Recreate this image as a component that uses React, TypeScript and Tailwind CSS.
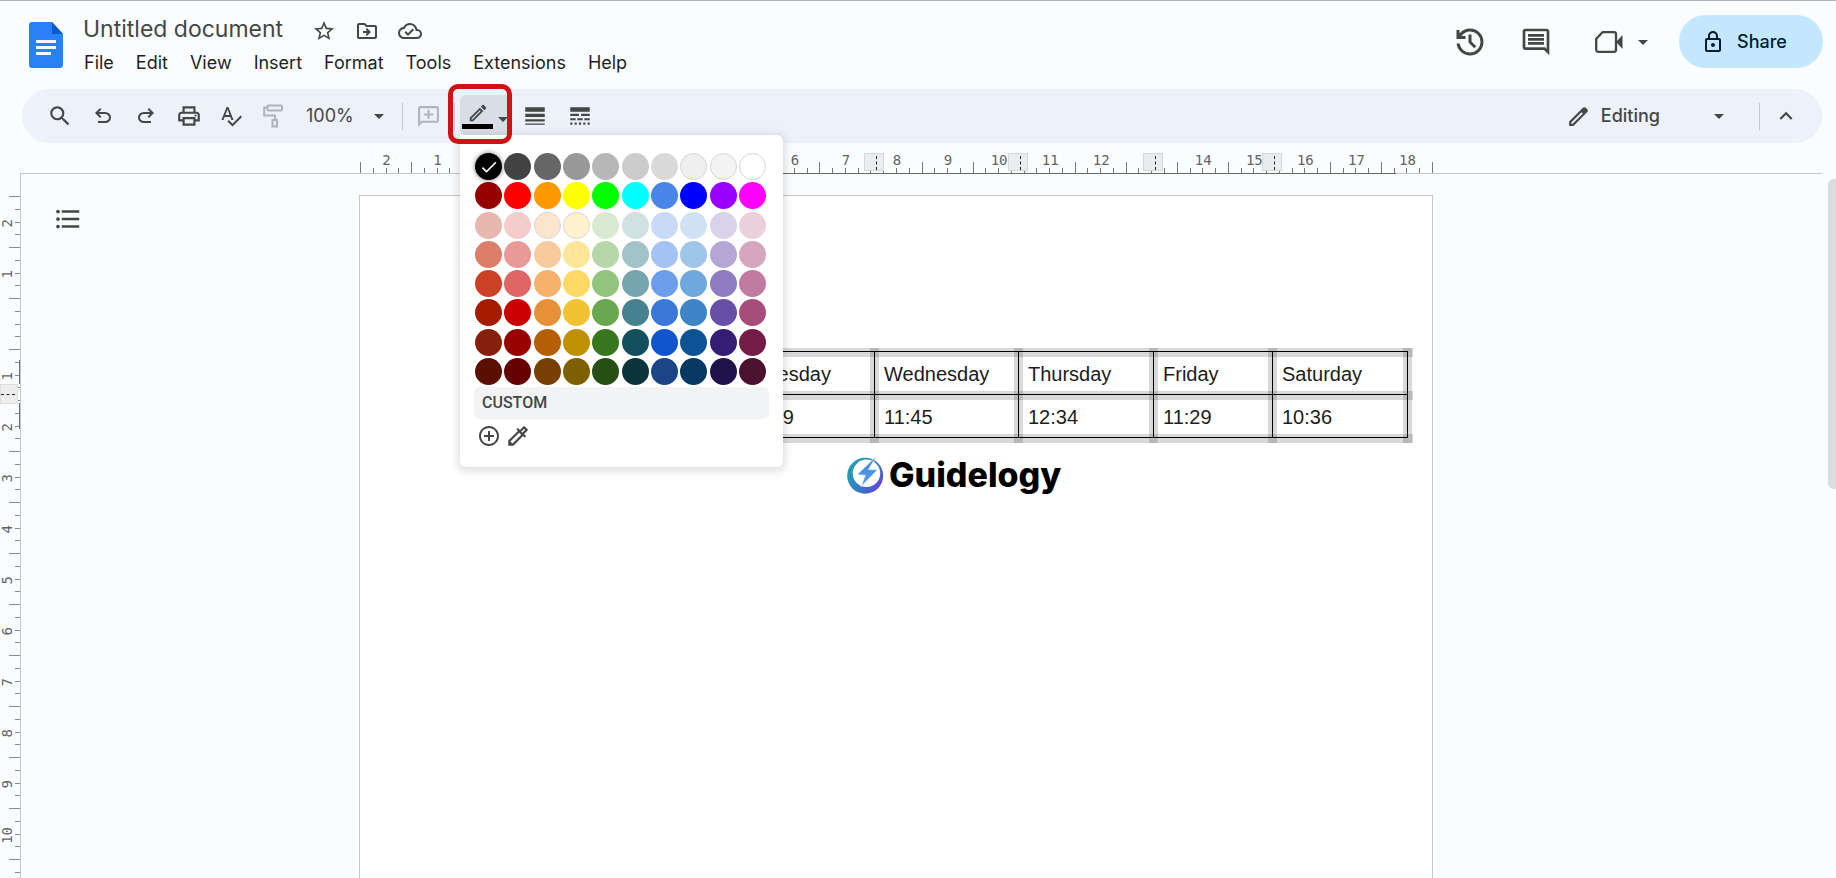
import type { ReactNode } from 'react';
import {
  MdAddCircleOutline,
  MdArrowDropDown,
  MdCheck,
  MdFormatListBulleted,
  MdKeyboardArrowUp,
  MdLineStyle,
  MdLineWeight,
  MdOutlineCloudDone,
  MdOutlineColorize,
  MdOutlineComment,
  MdOutlineDriveFileMove,
  MdOutlineEdit,
  MdOutlineLock,
  MdOutlinePrint,
  MdSearch,
  MdStarBorder,
} from 'react-icons/md';

const MENUS = ['File', 'Edit', 'View', 'Insert', 'Format', 'Tools', 'Extensions', 'Help'];

const PALETTE = [
  ['#000000', '#434343', '#666666', '#999999', '#b7b7b7', '#cccccc', '#d9d9d9', '#efefef', '#f3f3f3', '#ffffff'],
  ['#980000', '#ff0000', '#ff9900', '#ffff00', '#00ff00', '#00ffff', '#4a86e8', '#0000ff', '#9900ff', '#ff00ff'],
  ['#e6b8af', '#f4cccc', '#fce5cd', '#fff2cc', '#d9ead3', '#d0e0e3', '#c9daf8', '#cfe2f3', '#d9d2e9', '#ead1dc'],
  ['#dd7e6b', '#ea9999', '#f9cb9c', '#ffe599', '#b6d7a8', '#a2c4c9', '#a4c2f4', '#9fc5e8', '#b4a7d6', '#d5a6bd'],
  ['#cc4125', '#e06666', '#f6b26b', '#ffd966', '#93c47d', '#76a5af', '#6d9eeb', '#6fa8dc', '#8e7cc3', '#c27ba0'],
  ['#a61c00', '#cc0000', '#e69138', '#f1c232', '#6aa84f', '#45818e', '#3c78d8', '#3d85c6', '#674ea7', '#a64d79'],
  ['#85200c', '#990000', '#b45f06', '#bf9000', '#38761d', '#134f5c', '#1155cc', '#0b5394', '#351c75', '#741b47'],
  ['#5b0f00', '#660000', '#783f04', '#7f6000', '#274e13', '#0c343d', '#1c4587', '#073763', '#20124d', '#4c1130'],
];
const OUTLINED = ['#efefef', '#f3f3f3', '#ffffff', '#fce5cd', '#fff2cc'];

const H_LABELS = ['2', '1', '', '1', '2', '3', '4', '5', '6', '7', '8', '9', '10', '11', '12', '13', '14', '15', '16', '17', '18'];
const V_LABELS = ['2', '1', '', '1', '2', '3', '4', '5', '6', '7', '8', '9', '10', ''];
const COLUMN_MARKERS = [504, 648, 783, 902];

const COLUMNS = [
  { day: 'Sunday', time: '10:15', width: 131 },
  { day: 'Monday', time: '11:20', width: 131 },
  { day: 'Tuesday', time: '9:19', width: 129 },
  { day: 'Wednesday', time: '11:45', width: 144 },
  { day: 'Thursday', time: '12:34', width: 135 },
  { day: 'Friday', time: '11:29', width: 119 },
  { day: 'Saturday', time: '10:36', width: 135 },
];
const EDGES = COLUMNS.reduce<number[]>((edges, c) => [...edges, edges[edges.length - 1] + c.width], [0]);

function Icon({ d, className }: { d: string; className: string }) {
  return (
    <svg viewBox="0 0 24 24" fill="currentColor" aria-hidden="true" className={className}>
      <path d={d} />
    </svg>
  );
}

const UNDO = 'M7 19v-2h7.1q1.575 0 2.737-1T18 13.5 16.837 11 14.1 10H7.8l2.6 2.6L9 14 4 9l5-5 1.4 1.4L7.8 8h6.3q2.425 0 4.163 1.575T20 13.5t-1.737 3.925T14.1 19z';
const REDO = 'M9.9 19q-2.425 0-4.163-1.575T4 13.5t1.737-3.925T9.9 8h6.3l-2.6-2.6L15 4l5 5-5 5-1.4-1.4 2.6-2.6H9.9q-1.575 0-2.737 1T6 13.5t1.163 2.5 2.737 1H17v2z';
const SPELL = 'M12.45 16h2.09L9.43 3H7.57L2.46 16h2.09l1.12-3h5.64l1.14 3zm-6.02-5L8.5 5.48 10.57 11H6.43zm15.16.59l-8.09 8.09L9.83 16l-1.41 1.41 5.09 5.09L23 13l-1.41-1.41z';
const ADD_COMMENT = 'M20 2H4c-1.1 0-2 .9-2 2v18l4-4h14c1.1 0 2-.9 2-2V4c0-1.1-.9-2-2-2zm0 14H5.17L4 17.17V4h16v12zM11 5.500h2v3.500h3.500v2H13v3.500h-2V11H7.500V9H11z';
const PENCIL = 'M20.41 4.94l-1.35-1.35c-.78-.78-2.05-.78-2.83 0L3 16.82V21h4.18L20.41 7.77c.79-.78.79-2.05 0-2.83zm-14 14.12L5 19v-1.36l9.82-9.82 1.41 1.41-9.82 9.83z';
const HISTORY = 'M12 21q-3.45 0-6.012-2.287T3.05 13H5.1q.35 2.6 2.312 4.3T12 19q2.925 0 4.963-2.037T19 12t-2.037-4.963T12 5q-1.725 0-3.225.8T6.25 8H9v2H3V4h2v2.35q1.275-1.6 3.113-2.475T12 3q1.875 0 3.513.713t2.85 1.924 1.925 2.85T21 12t-.712 3.513-1.925 2.85-2.85 1.925T12 21m2.8-4.8L11 12.4V7h2v4.6l3.2 3.2z';

function DocsLogo() {
  return (
    <svg viewBox="0 0 34 46" aria-hidden="true" className="h-[46px] w-[34px]">
      <path d="M3 0h20l11 12v31a3 3 0 0 1-3 3H3a3 3 0 0 1-3-3V3a3 3 0 0 1 3-3z" fill="#2a7ffb" />
      <path d="M23 0l11 12H23z" fill="#0b5cc8" />
      <path d="M7 19.500h20M7 25.500h20M7 31.500h15" stroke="#f3f9ff" strokeWidth="3" />
    </svg>
  );
}

function PaintRoller() {
  return (
    <svg viewBox="0 0 20 24" fill="none" stroke="currentColor" strokeWidth="2" aria-hidden="true" className="h-6 w-5">
      <rect x="4.500" y="1.500" width="14.500" height="5" rx="1" />
      <path d="M4.500 3.500H1.200V11.500H12v4.500" />
      <rect x="9.500" y="16" width="4.500" height="6.500" />
    </svg>
  );
}

function VideoCamera() {
  return (
    <svg viewBox="0 0 28 22" aria-hidden="true" className="h-[22px] w-7">
      <path
        d="M7.500 1.200H19a2 2 0 0 1 2 2v15.600a2 2 0 0 1-2 2H3.200a2 2 0 0 1-2-2V7.800z"
        fill="none"
        stroke="currentColor"
        strokeWidth="2.300"
        strokeLinejoin="round"
      />
      <path d="M21 11l6.500-7v14z" fill="currentColor" />
    </svg>
  );
}

function BrandMark() {
  return (
    <svg viewBox="0 0 112 116" aria-hidden="true" className="h-[38px] w-[37px]">
      <defs>
        <linearGradient id="ring" x1="0" y1="0.200" x2="1" y2="0.900">
          <stop offset="0" stopColor="#25a3ae" />
          <stop offset="0.500" stopColor="#2f7fc4" />
          <stop offset="1" stopColor="#6d3be0" />
        </linearGradient>
        <linearGradient id="bolt" x1="0" y1="0" x2="0" y2="1">
          <stop offset="0" stopColor="#3d7fd6" />
          <stop offset="1" stopColor="#5aa2f2" />
        </linearGradient>
      </defs>
      <circle cx="55" cy="60" r="55" fill="url(#ring)" />
      <circle cx="59" cy="53" r="42" fill="#fff" />
      <path d="M90 0L30 57l25 2-13 35 51-52-28-1z" fill="url(#bolt)" stroke="#fff" strokeWidth="2" />
    </svg>
  );
}

function ToolButton({ label, className = 'w-[43px]', children }: { label: string; className?: string; children: ReactNode }) {
  return (
    <button type="button" aria-label={label} className={`flex h-10 shrink-0 items-center justify-center ${className}`}>
      {children}
    </button>
  );
}

function Divider() {
  return <span className="h-[27px] w-px shrink-0 bg-[#c4c7cf]" />;
}

function ColorMenu() {
  return (
    <div className="absolute top-full left-0 z-20 h-[332px] w-[323px] rounded-b-md rounded-tr-md bg-white px-[14px] pt-[17px] shadow-[0_2px_8px_2px_rgba(60,64,67,0.18)]">
      <div className="grid h-[234px] w-[293px] grid-cols-10 grid-rows-8 place-items-center">
        {PALETTE.flat().map((color, i) => (
          <button
            key={color}
            type="button"
            aria-label={color}
            className={`flex size-[27px] items-center justify-center rounded-full ${OUTLINED.includes(color) ? 'border border-[#d5d5d5]' : ''} ${i === 0 ? 'shadow-[0_0_4px_1px_rgba(0,0,0,0.35)]' : ''}`}
            style={{ backgroundColor: color }}
          >
            {i === 0 && <MdCheck className="size-5 text-white" />}
          </button>
        ))}
      </div>
      <div className="mt-px flex h-8 items-center rounded-md bg-[#f1f3f4] px-2 font-[Roboto,sans-serif] text-base leading-none font-medium text-[#444746]">
        CUSTOM
      </div>
      <div className="mt-1 flex gap-1 pl-[3px] text-[#444746]">
        <button type="button" aria-label="Add a custom color">
          <MdAddCircleOutline className="size-6" />
        </button>
        <button type="button" aria-label="Pick a color from the page">
          <MdOutlineColorize className="size-[26px]" />
        </button>
      </div>
    </div>
  );
}

function Header() {
  return (
    <header className="flex h-[88px] shrink-0 items-start justify-between pr-[13px] pl-[29px]">
      <div className="flex">
        <div className="pt-[21px]">
          <DocsLogo />
        </div>
        <div className="pt-2 pl-5">
          <div className="flex h-10 items-center text-[#444746]">
            <input
              aria-label="Document title"
              defaultValue="Untitled document"
              className="w-[229px] bg-transparent text-[23px] leading-8 outline-none"
            />
            <button type="button" aria-label="Star" className="flex w-[43px] pt-1">
              <MdStarBorder className="size-6" />
            </button>
            <button type="button" aria-label="Move" className="flex w-[43px] pt-1">
              <MdOutlineDriveFileMove className="size-6" />
            </button>
            <button type="button" aria-label="Document status" className="flex pt-1">
              <MdOutlineCloudDone className="size-6" />
            </button>
          </div>
          <nav className="flex gap-[22px] pl-px text-lg leading-7 text-[#1f1f1f]">
            {MENUS.map((m) => (
              <button key={m} type="button">
                {m}
              </button>
            ))}
          </nav>
        </div>
      </div>
      <div className="flex items-center pt-[14px] text-[#444746]">
        <button type="button" aria-label="Version history">
          <Icon d={HISTORY} className="size-9" />
        </button>
        <button type="button" aria-label="Comments" className="ml-8">
          <MdOutlineComment className="size-8" />
        </button>
        <button type="button" aria-label="Join a call" className="ml-[43px] flex items-center gap-2">
          <VideoCamera />
          <MdArrowDropDown className="size-6" />
        </button>
        <button
          type="button"
          className="ml-6 flex h-[53px] w-36 items-center gap-3 rounded-full bg-[#c2e7ff] pl-[22px] text-lg font-medium text-[#001d35]"
        >
          <MdOutlineLock className="size-6" />
          Share
        </button>
      </div>
    </header>
  );
}

function Toolbar() {
  return (
    <div className="mr-[14px] ml-[22px] flex h-[54px] shrink-0 items-center justify-between rounded-full bg-[#edf1fa] text-[#444746]">
      <div className="flex items-center pl-4">
        <ToolButton label="Search the menus">
          <MdSearch className="size-[26px]" />
        </ToolButton>
        <ToolButton label="Undo">
          <Icon d={UNDO} className="size-6" />
        </ToolButton>
        <ToolButton label="Redo">
          <Icon d={REDO} className="size-6" />
        </ToolButton>
        <ToolButton label="Print">
          <MdOutlinePrint className="size-[26px]" />
        </ToolButton>
        <ToolButton label="Spelling and grammar check" className="w-[42px]">
          <Icon d={SPELL} className="size-6" />
        </ToolButton>
        <ToolButton label="Paint format" className="w-[42px]">
          <span className="text-[#b0b3b8]">
            <PaintRoller />
          </span>
        </ToolButton>
        <button type="button" className="flex h-10 w-[108px] items-center justify-between pr-[11px] pl-3 text-lg">
          100%
          <MdArrowDropDown className="size-6" />
        </button>
        <Divider />
        <ToolButton label="Add comment" className="w-[51px]">
          <Icon d={ADD_COMMENT} className="size-[25px] text-[#b0b3b8]" />
        </ToolButton>
        <Divider />
        <div className="relative mb-0.5 ml-[5px]">
          <button
            type="button"
            aria-label="Border color"
            className="flex h-10 w-[47px] items-center rounded-l-md bg-[#d9dee6] pl-[2px]"
          >
            <span className="flex w-[31px] shrink-0 flex-col items-center">
              <MdOutlineEdit className="size-[22px]" />
              <span className="h-[5px] w-full bg-black" />
            </span>
            <MdArrowDropDown className="-ml-0.5 mt-2 size-6 shrink-0" />
          </button>
          <ColorMenu />
          <div className="pointer-events-none absolute -top-[11px] -left-3 z-30 h-[60px] w-16 rounded-[10px] border-5 border-[#cf1214]" />
        </div>
        <ToolButton label="Border width" className="ml-[5px] w-[45px]">
          <MdLineWeight className="size-[26px]" />
        </ToolButton>
        <ToolButton label="Border dash" className="w-[45px]">
          <MdLineStyle className="size-[26px]" />
        </ToolButton>
      </div>
      <div className="flex items-center pr-[22px]">
        <button type="button" className="flex h-10 items-center text-lg font-medium">
          <Icon d={PENCIL} className="size-[25px]" />
          <span className="ml-[10px]">Editing</span>
          <MdArrowDropDown className="ml-[47px] size-6" />
        </button>
        <span className="ml-7 flex">
          <Divider />
        </span>
        <ToolButton label="Hide the menus" className="ml-3 w-7">
          <MdKeyboardArrowUp className="size-[26px]" />
        </ToolButton>
      </div>
    </div>
  );
}

function HorizontalRuler() {
  return (
    <div className="mr-[14px] ml-5 flex h-[31px] shrink-0 justify-center border-b border-[#c4c7c5] pr-[49px]">
      <div className="relative flex h-[30px] w-[1073px] font-['DejaVu_Sans_Mono',monospace] text-sm leading-none text-[#5f6368]">
        {H_LABELS.map((label, i) => (
          <div key={i} className="grid flex-1">
            <span className="col-start-1 row-start-1 mt-[10px] justify-self-center pl-[2px]">{label}</span>
            <span className="col-start-1 row-start-1 flex items-end self-end">
              <span className="h-[11px] flex-1 border-l border-[#777]" />
              <span className="h-[5px] flex-1 border-l border-[#777]" />
              <span className="h-[5px] flex-1 border-l border-[#777]" />
              <span className="h-[5px] flex-1 border-l border-[#777]" />
            </span>
          </div>
        ))}
        <span className="h-[11px] self-end border-l border-[#777]" />
        <span className="absolute -bottom-px left-[128px] h-px w-[908px] bg-[#666b68]" />
        {COLUMN_MARKERS.map((x) => (
          <span
            key={x}
            className="absolute top-[10px] flex h-[18px] w-5 justify-center border border-[#d5d7d8] bg-[#ebeced] pt-[2px] pl-1"
            style={{ left: x }}
          >
            <span className="h-[14px] border-l border-dashed border-[#222]" />
          </span>
        ))}
      </div>
    </div>
  );
}

function VerticalRuler() {
  return (
    <div className="relative w-[21px] shrink-0 overflow-hidden border-r border-[#c4c7c5] pt-[22px] font-['DejaVu_Sans_Mono',monospace] text-sm leading-none text-[#5f6368]">
      {V_LABELS.map((label, i) => (
        <div key={i} className="grid h-[51px] grid-cols-1 grid-rows-1">
          <span className="col-start-1 row-start-1 mt-[3px] rotate-180 self-center justify-self-start [writing-mode:vertical-rl]">
            {label}
          </span>
          <span className="col-start-1 row-start-1 flex w-[11px] flex-col items-end justify-self-end">
            <span className="w-[11px] flex-1 border-t border-[#888]" />
            <span className="w-[5px] flex-1 border-t border-[#888]" />
            <span className="w-[5px] flex-1 border-t border-[#888]" />
            <span className="w-[5px] flex-1 border-t border-[#888]" />
          </span>
        </div>
      ))}
      <span className="absolute top-[186px] right-0 h-6 w-px bg-[#6b6e70]" />
      <span className="absolute top-[229px] right-0 h-[26px] w-px bg-[#6b6e70]" />
      <span className="absolute top-[210px] left-0 flex h-5 w-[18px] flex-col justify-center border border-[#dcdedf] bg-[#ededee]">
        <span className="w-[14px] border-t border-dashed border-[#222]" />
      </span>
    </div>
  );
}

function ScheduleTable() {
  return (
    <div className="relative w-[925px]">
      <table className="w-[925px] table-fixed border-collapse text-left font-['Liberation_Sans',Arial,sans-serif] text-xl leading-none text-[#1c1c1c]">
        <colgroup>
          {COLUMNS.map((c) => (
            <col key={c.day} style={{ width: c.width }} />
          ))}
        </colgroup>
        <thead>
          <tr className="h-[43px]">
            {COLUMNS.map((c) => (
              <th key={c.day} scope="col" className="border border-black pt-[2px] pr-0 pb-0 pl-[9px] font-normal">
                {c.day}
              </th>
            ))}
          </tr>
        </thead>
        <tbody>
          <tr className="h-[43px]">
            {COLUMNS.map((c) => (
              <td key={c.day} className="border border-black pt-[2px] pr-0 pb-0 pl-[9px]">
                {c.time}
              </td>
            ))}
          </tr>
        </tbody>
      </table>
      {[0, 43, 86].map((y) => (
        <span key={y} className="absolute -left-1 -mt-[3px] h-[9px] w-[934px] bg-black/15" style={{ top: y }} />
      ))}
      {EDGES.map((x) => (
        <span key={x} className="absolute -top-[3px] -ml-1 h-[95px] w-[9px] bg-black/15" style={{ left: x }} />
      ))}
    </div>
  );
}

export default function App() {
  return (
    <div className="flex h-screen flex-col overflow-hidden border-t border-[#b2b3b8] bg-[#fafcfe] font-[Inter,sans-serif]">
      <Header />
      <Toolbar />
      <HorizontalRuler />
      <div className="flex min-h-0 flex-1">
        <VerticalRuler />
        <main className="grid min-w-0 flex-1 grid-cols-[1fr_auto_1fr] pr-[57px]">
          <div className="pt-[30px] pl-8">
            <button type="button" aria-label="Show document outline" className="text-[#444746]">
              <MdFormatListBulleted className="size-[30px]" />
            </button>
          </div>
          <article className="mt-[21px] w-[1074px] border border-b-0 border-[#c4c7c5] bg-white pt-[155px] pl-[123px]">
            <ScheduleTable />
            <div className="flex items-center gap-[5px] pt-[15px] pl-[364px] text-[34px] leading-[44px] font-extrabold text-black">
              <BrandMark />
              Guidelogy
            </div>
          </article>
          <div />
        </main>
        <div className="mt-[5px] h-[310px] w-2 shrink-0 rounded-l-md bg-[#dadce0]" />
      </div>
    </div>
  );
}
